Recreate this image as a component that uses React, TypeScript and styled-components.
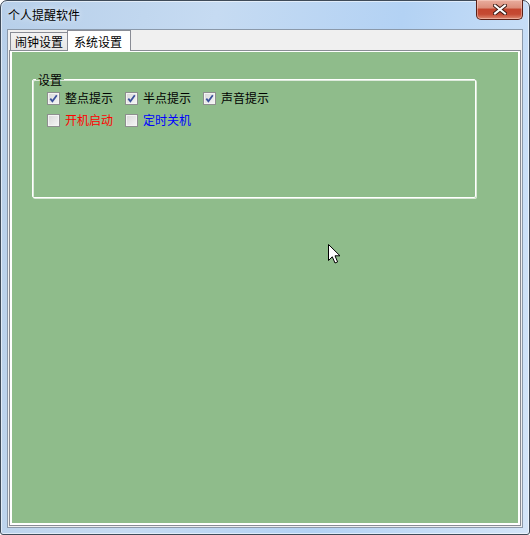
import React from 'react';
import styled, { createGlobalStyle } from 'styled-components';

const GlobalStyle = createGlobalStyle`
  html, body {
    margin: 0;
    padding: 0;
    background: #ffffff;
  }
  body {
    font-family: "Noto Sans CJK SC", "Noto Sans", sans-serif;
    font-size: 12px;
  }
`;

type Option = { label: string; checked: boolean; color?: string };

const rows: Option[][] = [
  [
    { label: '整点提示', checked: true },
    { label: '半点提示', checked: true },
    { label: '声音提示', checked: true },
  ],
  [
    { label: '开机启动', checked: false, color: '#ff0000' },
    { label: '定时关机', checked: false, color: '#0000ff' },
  ],
];

const CheckBox: React.FC<Option> = ({ label, checked, color }) => (
  <CheckItem>
    <Box>
      {checked && (
        <svg width="9" height="9" viewBox="0 0 9 9">
          <path d="M1.3 4.6 L3.4 7.2 L7.8 1.2" fill="none" stroke="#3a519a" strokeWidth="1.8" />
        </svg>
      )}
    </Box>
    <CheckLabel $color={color}>{label}</CheckLabel>
  </CheckItem>
);

const App: React.FC = () => {
  return (
    <>
      <GlobalStyle />
      <Screen>
        <Window>
          <TitleBar>
            <Title>个人提醒软件</Title>
            <CloseButton>
              <svg width="14" height="11" viewBox="0 0 14 11">
                <path d="M2 1.5 L12 9.5 M12 1.5 L2 9.5" stroke="#3b1a14" strokeWidth="4" strokeLinecap="square" />
                <path d="M2 1.5 L12 9.5 M12 1.5 L2 9.5" stroke="#ffffff" strokeWidth="2" strokeLinecap="square" />
              </svg>
            </CloseButton>
          </TitleBar>
          <Client>
            <TabStrip>
              <Tab>闹钟设置</Tab>
              <Tab $active>系统设置</Tab>
            </TabStrip>
            <Panel>
              <GreenArea>
                <GroupBox>
                  <Legend>设置</Legend>
                  <OptionGrid>
                    {rows.map((row, i) =>
                      row.map((opt, j) => <CheckBox key={`${i}-${j}`} {...opt} />)
                    )}
                  </OptionGrid>
                </GroupBox>
                <Cursor width="13" height="21" viewBox="0 0 13 21">
                  <path
                    d="M0.5 0.5 L0.5 16.5 L4.3 12.8 L7 19 L9.6 17.9 L7 11.8 L12 11.8 Z"
                    fill="#ffffff"
                    stroke="#000000"
                    strokeWidth="1"
                    strokeLinejoin="miter"
                  />
                </Cursor>
              </GreenArea>
            </Panel>
          </Client>
        </Window>
      </Screen>
    </>
  );
};

export default App;

const Screen = styled.div`
  width: 530px;
  height: 535px;
  display: flex;
`;

const Window = styled.div`
  flex: 1;
  display: flex;
  flex-direction: column;
  border: 1px solid #3f4b59;
  border-radius: 7px 7px 3px 3px;
  background: linear-gradient(100deg, #b7cfe9 0%, #c6dbf2 35%, #b3d2f4 65%, #d4e5f8 100%);
  box-shadow: inset 0 0 0 1px rgba(255, 255, 255, 0.55);
`;

const TitleBar = styled.div`
  height: 28px;
  display: flex;
  justify-content: space-between;
  align-items: flex-start;
  padding-left: 7px;
`;

const Title = styled.span`
  line-height: 27px;
  font-size: 12px;
  color: #000000;
  text-shadow: 0 0 6px rgba(255, 255, 255, 0.9);
`;

const CloseButton = styled.div`
  width: 45px;
  height: 19px;
  margin-top: -1px;
  margin-right: 6px;
  display: flex;
  align-items: center;
  justify-content: center;
  border: 1px solid #5a2016;
  border-top: none;
  border-radius: 0 0 5px 5px;
  background: linear-gradient(
    #e9ad9e 0%,
    #dc8e7b 40%,
    #c4452e 50%,
    #c54a33 75%,
    #de8a72 100%
  );
  box-shadow: inset 0 0 0 1px rgba(255, 220, 210, 0.45);
`;

const Client = styled.div`
  flex: 1;
  display: flex;
  flex-direction: column;
  margin: 0 6px 6px 6px;
  border: 1px solid #8b99aa;
  background: #f0f0f0;
`;

const TabStrip = styled.div`
  height: 20px;
  display: flex;
  align-items: flex-end;
  padding-left: 2px;
  position: relative;
  z-index: 1;
`;

const Tab = styled.div<{ $active?: boolean }>`
  height: ${({ $active }) => ($active ? '21px' : '18px')};
  margin-bottom: ${({ $active }) => ($active ? '-1px' : '0')};
  margin-left: ${({ $active }) => ($active ? '-1px' : '0')};
  padding: ${({ $active }) => ($active ? '0 8px 0 6px' : '0 4px 0 4px')};
  box-sizing: border-box;
  display: flex;
  align-items: center;
  border: 1px solid #898c95;
  border-bottom: none;
  background: ${({ $active }) =>
    $active ? '#ffffff' : 'linear-gradient(#f2f2f2, #e6e6e6)'};
  font-size: 12px;
  color: #000000;
  white-space: nowrap;
`;

const Panel = styled.div`
  flex: 1;
  display: flex;
  margin: 0 1px 1px 1px;
  border: 1px solid #898c95;
  background: #ffffff;
  padding: 1px 2px 2px 2px;
`;

const GreenArea = styled.div`
  flex: 1;
  position: relative;
  background: #8fbc8b;
  padding: 20px 0 0 20px;
`;

const GroupBox = styled.fieldset`
  width: 444px;
  height: 126px;
  box-sizing: border-box;
  margin: 0;
  padding: 0;
  border: 1px solid #ffffff;
  border-radius: 2px;
  box-shadow: inset 1px 1px 0 rgba(230, 238, 228, 0.9), 1px 1px 0 rgba(235, 242, 233, 0.8);
`;

const Legend = styled.legend`
  margin-left: 3px;
  padding: 0 2px;
  font-size: 12px;
  line-height: 15px;
  color: #000000;
`;

const OptionGrid = styled.div`
  display: grid;
  grid-template-columns: repeat(3, 78px);
  row-gap: 6px;
  padding: 3px 0 0 14px;
`;

const CheckItem = styled.div`
  height: 16px;
  display: flex;
  align-items: center;
  gap: 5px;
`;

const Box = styled.span`
  width: 13px;
  height: 13px;
  box-sizing: border-box;
  display: flex;
  align-items: center;
  justify-content: center;
  border: 1px solid #8e8f8f;
  background: linear-gradient(135deg, #d8d8d8 0%, #f6f6f6 100%);
  box-shadow: inset 0 0 0 1px #f4f4f4;
`;

const CheckLabel = styled.span<{ $color?: string }>`
  font-size: 12px;
  line-height: 16px;
  color: ${({ $color }) => $color || '#000000'};
  white-space: nowrap;
`;

const Cursor = styled.svg`
  position: absolute;
  left: 316px;
  top: 192px;
`;
